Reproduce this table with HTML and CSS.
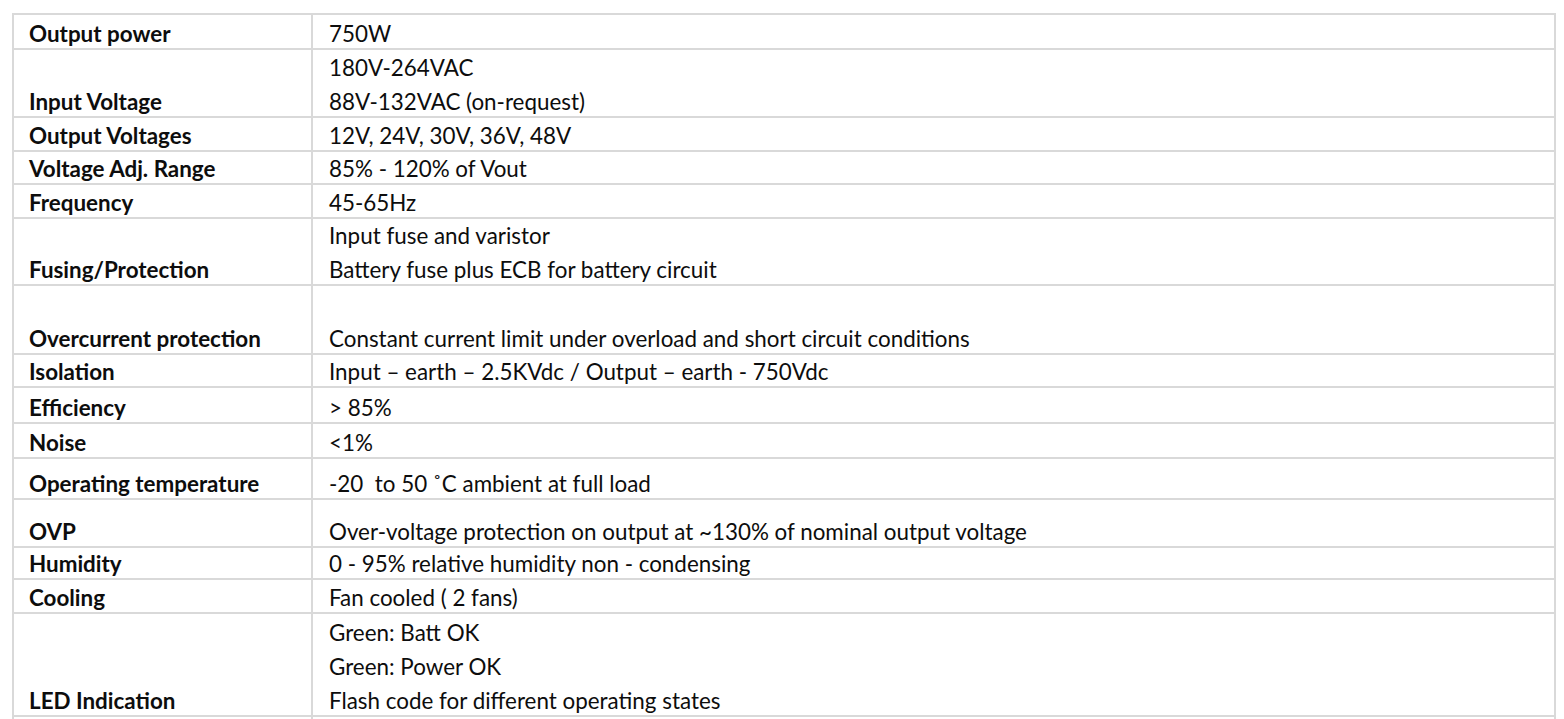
FILE: index.html
```html
<!DOCTYPE html>
<html>
<head>
<meta charset="utf-8">
<link rel="stylesheet" href="styles.css">
</head>
<body>
<table class="spec">
  <tr class="p4"><td class="label">Output power</td><td>750W</td></tr>
  <tr class="p3"><td class="label">Input Voltage</td><td><div class="lines"><div>180V-264VAC</div><div>88V-132VAC (on-request)</div></div></td></tr>
  <tr class="p3"><td class="label">Output Voltages</td><td>12V, 24V, 30V, 36V, 48V</td></tr>
  <tr class="p2"><td class="label">Voltage Adj. Range</td><td>85% - 120% of Vout</td></tr>
  <tr class="p3"><td class="label">Frequency</td><td>45-65Hz</td></tr>
  <tr class="p2"><td class="label">Fusing/Protection</td><td><div class="lines"><div>Input fuse and varistor</div><div>Battery fuse plus ECB for battery circuit</div></div></td></tr>
  <tr class="p4"><td class="label">Overcurrent protection</td><td><div class="lines"><div>&nbsp;</div><div>Constant current limit under overload and short circuit conditions</div></div></td></tr>
  <tr class="p2"><td class="label">Isolation</td><td>Input – earth – 2.5KVdc / Output – earth - 750Vdc</td></tr>
  <tr class="p5"><td class="label">Efficiency</td><td>&gt; 85%</td></tr>
  <tr class="p4"><td class="label">Noise</td><td>&lt;1%</td></tr>
  <tr class="p10"><td class="label">Operating temperature</td><td>-20&nbsp; to 50 ˚C ambient at full load</td></tr>
  <tr class="p17"><td class="label">OVP</td><td>Over-voltage protection on output at ~130% of nominal output voltage</td></tr>
  <tr class="p1"><td class="label">Humidity</td><td>0 - 95% relative humidity non - condensing</td></tr>
  <tr class="p3"><td class="label">Cooling</td><td>Fan cooled ( 2 fans)</td></tr>
  <tr class="p4"><td class="label">LED Indication</td><td><div class="lines"><div>Green: Batt OK</div><div>Green: Power OK</div><div>Flash code for different operating states</div></div></td></tr>
  <tr class="p4"><td class="label">&nbsp;</td><td>&nbsp;</td></tr>
</table>
</body>
</html>
```
FILE: styles.css
```css
html, body {
  margin: 0;
  padding: 0;
  background: #ffffff;
}
body {
  padding: 13px 0 0 12px;
  font-family: Lato, "Liberation Sans", sans-serif;
  font-size: 22.4px;
  color: #0d0d0d;
}
.spec {
  border-collapse: collapse;
  width: 1544px;
  table-layout: fixed;
}
.spec td {
  border: 2px solid #d9d9d9;
  padding: 0 16px;
  line-height: 29px;
  vertical-align: bottom;
  white-space: nowrap;
}
.spec td.label {
  width: 266px;
  padding-left: 15px;
  font-weight: bold;
}
.lines {
  display: flex;
  flex-direction: column;
  gap: 5px;
}
.spec tr.p1 td { padding-top: 1px; }
.spec tr.p2 td { padding-top: 2px; }
.spec tr.p3 td { padding-top: 3px; }
.spec tr.p4 td { padding-top: 4px; }
.spec tr.p5 td { padding-top: 5px; }
.spec tr.p10 td { padding-top: 10px; }
.spec tr.p17 td { padding-top: 17px; }
```
